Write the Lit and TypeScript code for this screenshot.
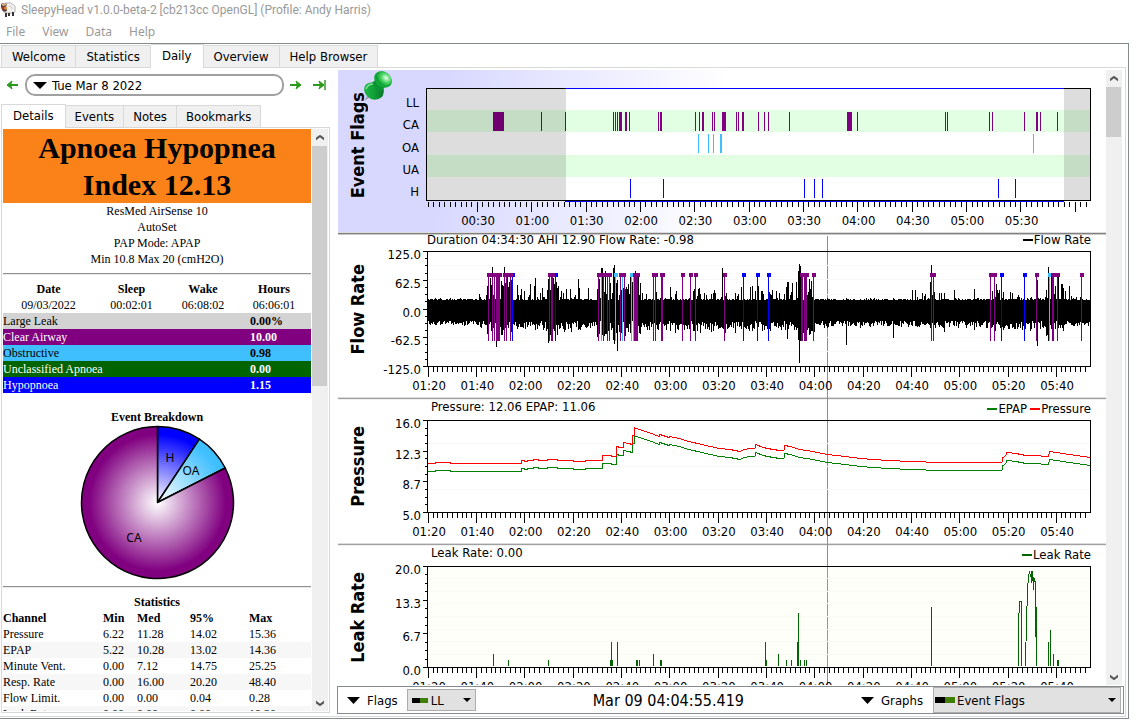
import { LitElement, html, svg, css } from "lit";
import { customElement, property } from "lit/decorators.js";

const PURPLE = "#800080";
const CYAN = "#40bfff";
const BLUE = "#0000ff";
const LEAK = "#006400";

type Bar = [x: number, width: number];

interface Channel {
  label: string;
  color: string;
  bars: Bar[];
}

const one = (...xs: number[]): Bar[] => xs.map((x) => [x, 1] as Bar);

const channels: Channel[] = [
  { label: "LL", color: "#808080", bars: [] },
  {
    label: "CA",
    color: PURPLE,
    bars: [
      [493, 11], [619, 3], [625, 2], [660, 2], [702, 2], [722, 4], [742, 2], [847, 5], [1036, 2],
      ...one(541, 565, 613, 615, 617, 629, 658, 695, 699, 712, 714, 736, 738, 758, 764, 768, 789, 857, 945, 947, 989, 992, 1024, 1040, 1057),
    ],
  },
  { label: "OA", color: CYAN, bars: [[720, 2], ...one(698, 708, 713, 1033)] },
  { label: "UA", color: "#006400", bars: [] },
  { label: "H", color: BLUE, bars: one(630, 663, 804, 814, 822, 998, 1015) },
];

const flowMarks: { color: string; heads: Bar[]; lines: Bar[] }[] = [
  {
    color: PURPLE,
    heads: [
      [487, 15], [503, 10], [548, 7], [597, 15], [619, 7], [633, 7], [652, 6], [660, 5], [681, 4], [689, 4], [694, 4], [723, 4],
      [800, 9], [812, 4], [930, 6], [989, 8], [1035, 4], [1051, 9], [1080, 4],
    ],
    lines: [
      [496, 4], [551, 2], [634, 4], [661, 2], [801, 2], [804, 3], [1052, 2],
      ...one(488, 492, 494, 504, 506, 510, 549, 598, 603, 607, 609, 620, 624, 653, 655, 682, 690, 695, 724, 813, 931, 933, 990, 994, 1036, 1057, 1081),
    ],
  },
  {
    color: BLUE,
    heads: [[513, 2], [555, 3], [742, 4], [756, 4], [767, 4], [1000, 4], [1023, 4]],
    lines: one(512, 555, 743, 757, 768, 1001, 1024),
  },
  {
    color: CYAN,
    heads: [[614, 4], [630, 3], [1048, 3]],
    lines: one(601, 615, 622, 631, 633, 1049),
  },
];

// Breathing envelope: from x, highest peak and lowest trough, share of tall breaths.
const envelope: [number, number, number, number][] = [
  [428, 298, 327, 0.3], [478, 292, 328, 0.5], [487, 272, 336, 0.9], [513, 284, 331, 0.5], [548, 274, 336, 0.9],
  [558, 284, 333, 0.35], [566, 288, 332, 0.3], [597, 270, 338, 0.9], [640, 286, 333, 0.3], [681, 286, 333, 0.4],
  [727, 286, 333, 0.4], [786, 278, 334, 0.7], [798, 266, 342, 1], [803, 276, 336, 0.8], [815, 298, 328, 0.3],
  [911, 292, 328, 0.3], [930, 275, 330, 0.9], [935, 292, 330, 0.3], [945, 298, 328, 0.3], [988, 282, 331, 0.7],
  [1000, 291, 332, 0.35], [1034, 288, 330, 0.5], [1046, 273, 336, 0.9], [1062, 284, 331, 0.5], [1070, 294, 328, 0.35],
  [1080, 284, 328, 0.6], [1084, 298, 327, 0.3],
];

const spikes: [number, number, number][] = [
  [492, 267, 330], [504, 267, 333], [496, 282, 347], [535, 278, 330], [548, 279, 343], [578, 279, 330], [601, 268, 335],
  [602, 268, 335], [613, 268, 340], [614, 265, 344], [617, 280, 351], [722, 268, 328], [799, 264, 363], [798, 271, 340],
  [800, 266, 341], [787, 282, 339], [846, 298, 345], [893, 298, 338], [912, 290, 325], [915, 290, 325], [931, 265, 332],
  [954, 290, 325], [974, 289, 330], [1037, 280, 346], [1048, 267, 341], [1049, 275, 340], [944, 293, 332], [640, 283, 334],
];

function flowPath(): string {
  let seed = 7919;
  const rnd = () => (seed = (seed * 16807) % 2147483647) / 2147483647;
  let d = "";
  for (let x = 428; x < 1090; x++) {
    const [, peak, trough, share] = [...envelope].reverse().find(([from]) => x >= from)!;
    const tall = rnd() < share;
    let top = 299 + Math.round(rnd()) - (tall ? Math.round(rnd() * (299 - peak)) : 0);
    let bottom = 321 + Math.round(rnd() * (trough - 321) * (tall ? 1 : 0.8));
    for (const [sx, t, b] of spikes) {
      if (sx === x) {
        top = Math.min(top, t);
        bottom = Math.max(bottom, b);
      }
    }
    d += `M${x} ${top}h1V${bottom}h-1z`;
  }
  return d;
}

const pressure: [number, number][] = [
  [428, 463], [435, 463], [435, 462], [450, 462], [450, 463], [521, 463], [521, 460], [524, 460], [524, 461], [527, 461],
  [527, 460], [533, 460], [533, 459], [538, 459], [538, 460], [547, 460], [547, 459], [557, 459], [557, 460], [573, 460],
  [573, 461], [585, 461], [585, 460], [602, 460], [602, 455], [611, 455], [611, 456], [616, 456], [616, 446], [618, 446],
  [618, 447], [623, 447], [623, 442], [629, 443], [632, 444], [632, 435], [634, 435], [634, 427], [639, 429], [649, 432],
  [659, 436], [660, 434], [669, 437], [670, 436], [679, 438], [689, 441], [702, 444], [719, 448], [730, 449], [740, 451],
  [744, 449], [750, 448], [755, 448], [756, 444], [763, 447], [773, 449], [780, 450], [784, 450], [785, 445], [790, 446],
  [800, 449], [813, 451], [827, 454], [845, 456], [861, 458], [873, 459], [888, 460], [911, 461], [941, 462], [1002, 462],
  [1003, 457], [1006, 455], [1007, 452], [1016, 453], [1026, 455], [1033, 455], [1048, 456], [1050, 451], [1063, 453],
  [1076, 455], [1090, 457],
];

const pressurePath = (shift: number) =>
  "M" + pressure.map(([x, y]) => `${x} ${y + shift + 0.5}`).join("L");

const leaks: [x: number, top: number, width: number][] = [
  [493, 654, 1], [508, 660, 1], [548, 660, 1], [610, 660, 3], [611, 642, 1], [617, 642, 1], [636, 660, 2], [639, 660, 1],
  [653, 654, 1], [660, 660, 2], [765, 642, 1], [766, 660, 1], [778, 654, 1], [786, 660, 1], [791, 660, 1], [797, 642, 1],
  [798, 613, 1], [800, 660, 1], [804, 660, 1], [806, 660, 1], [931, 607, 1], [1018, 613, 1], [1021, 601, 1],
  [1048, 642, 1], [1050, 630, 1], [1053, 654, 1], [1057, 660, 2],
];

const PLOT_X = 426;
const PLOT_W = 665;
const pct = (x: number) => `${((x - PLOT_X) / PLOT_W) * 100}%`;

const timeTicks = (y: number, start: number, step: number, per: number, phase: number) => {
  const out = [];
  for (let i = 0; start + i * step < 1089; i++) {
    const x = Math.floor(start + i * step);
    out.push(svg`<rect x=${x} y=${y} width="1" height=${(i - phase) % per === 0 ? 10 : 5}></rect>`);
  }
  return out;
};

const stdTicks = (y: number) => timeTicks(y, 428.3, 4.831, 10, 0);

const stdTimes = ["01:20", "01:40", "02:00", "02:20", "02:40", "03:00", "03:20", "03:40", "04:00", "04:20", "04:40", "05:00", "05:20", "05:40"]
  .map((text, i) => ({ text, x: 429 + i * 48.31 }));

const flagTimes = ["00:30", "01:00", "01:30", "02:00", "02:30", "03:00", "03:30", "04:00", "04:30", "05:00", "05:30"]
  .map((text, i) => ({ text, x: 478 + i * 54.36 }));

const frame = (top: number, bottom: number, left = 427) => svg`
  <path d="M${left} ${top}H1091V${bottom + 1}H${left}zM${left + 1} ${top + 1}V${bottom}H1090V${top + 1}z" fill-rule="evenodd"></path>`;

@customElement("graph-pane")
export class GraphPane extends LitElement {
  @property() name = "";
  @property() status = "";
  @property({ attribute: false }) legend: { text: string; color: string }[] = [];
  @property({ attribute: false }) yLabels: { text: string; y: number }[] = [];
  @property({ type: Boolean }) ticks = false;
  @property({ type: Number }) top = 0;
  @property({ type: Number }) plotHeight = 100;
  @property({ type: Number }) header = 20;
  @property({ attribute: false }) times: { text: string; x: number }[] = [];
  @property({ attribute: false }) plot: unknown = null;

  static styles = css`
    :host {
      display: block;
      position: relative;
      z-index: 1;
      flex: none;
      overflow: hidden;
    }
    .grid {
      display: grid;
      grid-template-columns: 40px 48px minmax(0, 1fr) 15px;
    }
    .name {
      grid-column: 1;
      grid-row: 2;
      min-height: 0;
      padding-bottom: 10px;
      display: flex;
      align-items: center;
      justify-content: center;
    }
    h2 {
      margin: 0;
      font-size: 18px;
      line-height: 24px;
      font-weight: bold;
      white-space: nowrap;
      writing-mode: vertical-rl;
      transform: rotate(180deg);
    }
    .head {
      grid-column: 3;
      grid-row: 1;
      display: flex;
      justify-content: space-between;
      align-items: flex-start;
      line-height: 14px;
      white-space: nowrap;
    }
    .tight {
      line-height: 10px;
    }
    .status {
      padding-left: 5px;
    }
    .tight .status {
      padding-left: 1px;
    }
    .legend {
      display: flex;
      gap: 3px;
      padding-top: 2px;
    }
    .tight .legend {
      padding-top: 0;
    }
    .legend span {
      display: flex;
      align-items: center;
      gap: 1px;
    }
    .legend svg {
      width: 10px;
      height: 2px;
    }
    .axis {
      grid-column: 2;
      grid-row: 2;
      width: 48px;
      overflow: visible;
    }
    .plot {
      grid-column: 3;
      grid-row: 2;
      width: 100%;
    }
    .times {
      grid-column: 3;
      grid-row: 3;
      width: 100%;
      height: 20px;
      overflow: visible;
    }
    svg {
      display: block;
    }
  `;

  private axisTicks() {
    if (!this.ticks) return null;
    const first = this.yLabels[0].y;
    const span = this.yLabels[this.yLabels.length - 1].y - first;
    const count = (this.yLabels.length - 1) * 4;
    return Array.from({ length: count + 1 }, (_, i) => {
      const major = i % 4 === 0;
      return svg`<rect x=${major ? 45 : 47} y=${Math.round(first + (span * i) / count)} width=${major ? 4 : 2} height="1"></rect>`;
    });
  }

  render() {
    return html`
      <section class="grid" style="grid-template-rows: ${this.header}px ${this.plotHeight}px 20px">
        <div class="name"><h2>${this.name}</h2></div>
        <div class="head ${this.header < 18 ? "tight" : ""}">
          <span class="status">${this.status}</span>
          <div class="legend">
            ${this.legend.map(
              (l) => html`<span><svg viewBox="0 0 10 2"><rect width="10" height="2" fill=${l.color}></rect></svg>${l.text}</span>`
            )}
          </div>
        </div>
        <svg class="axis" viewBox="0 ${this.top} 48 ${this.plotHeight}" height=${this.plotHeight} shape-rendering="crispEdges">
          ${this.axisTicks()}
          ${this.yLabels.map((l) => svg`<text x=${this.ticks ? 43 : 41} y=${Math.round(l.y + 8)} text-anchor="end">${l.text}</text>`)}
        </svg>
        <svg class="plot" viewBox="426 ${this.top} 665 ${this.plotHeight}" height=${this.plotHeight} preserveAspectRatio="none" shape-rendering="crispEdges">
          ${this.plot}
        </svg>
        <svg class="times">
          ${this.times.map((t) => svg`<text x=${pct(t.x)} y="13" text-anchor="middle">${t.text}</text>`)}
        </svg>
      </section>
    `;
  }
}

@customElement("scroll-bar")
export class ScrollBar extends LitElement {
  @property({ type: Number }) size = 100;

  static styles = css`
    :host {
      display: flex;
      flex-direction: column;
      width: 16px;
      flex: none;
      background: #f0f0f0;
    }
    button {
      display: flex;
      align-items: center;
      justify-content: center;
      height: 17px;
      width: 15px;
      padding: 0;
      border: 0;
      background: none;
    }
    .track {
      flex: 1;
      min-height: 0;
    }
    .thumb {
      width: 15px;
      background: #cdcdcd;
    }
  `;

  render() {
    return html`
      <button aria-label="Scroll up"><svg width="8" height="6"><path d="M0 5V3L4 0L8 3V5L4 2z" fill="#505050" stroke="#505050" stroke-width="0.5"></path></svg></button>
      <div class="track"><div class="thumb" style="height: ${this.size}px"></div></div>
      <button aria-label="Scroll down"><svg width="8" height="6"><path d="M0 1V3L4 6L8 3V1L4 4z" fill="#505050" stroke="#505050" stroke-width="0.5"></path></svg></button>
    `;
  }
}

const arrow = (bar: boolean) => svg`
  <path d="M1 6H9" stroke="#2a9a1c" stroke-width="2"></path>
  <path d="M7 2L12 6L7 10L8.500 6z" fill="#2a9a1c" stroke="#2a9a1c"></path>
  ${bar ? svg`<path d="M13 1V11" stroke="#3a9a30" stroke-width="1.500"></path>` : null}`;

const stats = [
  ["Pressure", "6.22", "11.28", "14.02", "15.36"],
  ["EPAP", "5.22", "10.28", "13.02", "14.36"],
  ["Minute Vent.", "0.00", "7.12", "14.75", "25.25"],
  ["Resp. Rate", "0.00", "16.00", "20.20", "48.40"],
  ["Flow Limit.", "0.00", "0.00", "0.04", "0.28"],
  ["Leak Rate", "0.00", "0.00", "0.00", "19.20"],
];

const indices = [
  { name: "Large Leak", value: "0.00%", cls: "ll" },
  { name: "Clear Airway", value: "10.00", cls: "ca" },
  { name: "Obstructive", value: "0.98", cls: "oa" },
  { name: "Unclassified Apnoea", value: "0.00", cls: "ua" },
  { name: "Hypopnoea", value: "1.15", cls: "hy" },
];

@customElement("app-root")
export class AppRoot extends LitElement {
  static styles = css`
    :host {
      display: flex;
      flex-direction: column;
      height: 100vh;
      background: #fff;
      color: #000;
      font-family: "DejaVu Sans Condensed", "Noto Sans", sans-serif;
      font-size: 13px;
    }
    button,
    select {
      font: inherit;
      color: inherit;
      margin: 0;
    }
    .title {
      display: flex;
      align-items: center;
      gap: 5px;
      height: 20px;
      color: #999;
      font-family: Roboto, "Noto Sans", sans-serif;
      font-size: 12px;
      white-space: nowrap;
    }
    .menu {
      display: flex;
      gap: 17px;
      height: 23px;
      padding-left: 6px;
      color: #999;
      font-family: "Noto Sans", sans-serif;
      font-size: 12px;
    }
    .menu button {
      border: 0;
      padding: 0;
      background: none;
    }
    .frame {
      flex: 1;
      min-height: 0;
      display: flex;
      flex-direction: column;
      margin: 0 4px 3px 0;
      padding: 0 2px 1px 0;
      border: solid #848a90;
      border-width: 1px 1px 1px 0;
    }
    .tabs {
      display: flex;
      align-items: flex-end;
      padding-left: 1px;
      height: 23px;
      flex: none;
    }
    .tabs button {
      height: 22px;
      padding: 0 10px;
      border: 1px solid #d9d9d9;
      border-left-width: 0;
      border-bottom: 0;
      background: #f0f0f0;
      white-space: nowrap;
    }
    .tabs button:first-child {
      border-left-width: 1px;
    }
    .side .tabs button {
      padding: 0 9px;
    }
    .tabs .on,
    .side .tabs .on {
      position: relative;
      height: 24px;
      margin-bottom: -1px;
      padding: 0 11px 2px;
      background: #fff;
    }
    .pane {
      flex: 1;
      min-height: 0;
      display: flex;
      gap: 7px;
      border: solid #d9d9d9;
      border-width: 1px 1px 1px 0;
    }
    .side {
      flex: none;
      width: 330px;
      display: flex;
      flex-direction: column;
      padding-bottom: 3px;
    }
    .nav {
      display: flex;
      align-items: center;
      height: 36px;
      padding-left: 5px;
      box-sizing: border-box;
      padding-bottom: 2px;
    }
    .icon {
      display: flex;
      border: 0;
      padding: 0;
      background: none;
    }
    .date {
      display: flex;
      align-items: center;
      gap: 5px;
      flex: 1;
      height: 22px;
      margin: 0 5px 0 5px;
      padding: 0 6px;
      border: 2px solid #a0a0a0;
      border-radius: 10px;
      background: #fff;
    }
    .next {
      margin-right: 8px;
    }
    .last {
      margin-right: 3px;
    }
    .box {
      flex: 1;
      min-height: 0;
      display: flex;
      margin-left: 1px;
      padding: 1px;
      border: 1px solid #d9d9d9;
    }
    .details {
      flex: 1;
      min-width: 0;
      overflow: hidden;
      margin-right: 1px;
      font-family: "Liberation Serif", serif;
      font-size: 12px;
      line-height: 16px;
      text-align: center;
    }
    h1 {
      margin: 0;
      background: #fa8219;
      font-size: 30px;
      line-height: 37px;
    }
    p {
      margin: 0;
    }
    hr {
      height: 1px;
      margin: 6px 0;
      border: 0;
      border-top: 1px solid #909090;
      background: #e8e8e8;
    }
    table {
      width: 100%;
      border-collapse: collapse;
      table-layout: fixed;
    }
    th,
    td {
      padding: 0;
      white-space: nowrap;
    }
    .index td,
    .stats td,
    .stats th {
      text-align: left;
    }
    .index td:last-child {
      width: 61px;
      font-weight: bold;
    }
    .ll { background: #d3d3d3; }
    .ca { background: #800080; color: #fff; }
    .oa { background: #40bfff; }
    .ua { background: #006400; color: #fff; }
    .hy { background: #00f; color: #fff; }
    h3 {
      margin: 0;
      font-size: 12px;
      line-height: 16px;
    }
    .breakdown {
      padding-top: 16px;
    }
    .breakdown svg {
      display: block;
      margin: 0 auto;
      font-family: "Noto Sans", sans-serif;
      font-size: 12px;
    }
    .stats tbody tr:nth-child(even) {
      background: #f7f7f7;
    }
    .main {
      flex: 1;
      min-width: 0;
      display: flex;
      flex-direction: column;
      padding: 2px 1px 2px 0;
    }
    .scroll {
      flex: 1;
      min-height: 0;
      display: flex;
      padding: 0 2px 1px 1px;
    }
    .graphs {
      flex: 1;
      min-width: 0;
      display: flex;
      flex-direction: column;
      overflow: hidden;
      position: relative;
    }
    .flags {
      background: linear-gradient(95deg, #d8d8ff 14%, #fff 50%);
    }
    .sep {
      flex: none;
      height: 1px;
      background: #a0a0a0;
      border: solid #dcdcdc;
      border-bottom-color: #f0f0f0;
      border-width: 1px 0;
    }
    .active {
      background: #808080;
      border-bottom-color: #c8c8c8;
    }
    .cursor-track {
      position: absolute;
      inset: 166px 15px 0 88px;
    }
    .cursor {
      position: absolute;
      top: 0;
      bottom: 0;
      width: 1px;
      background: #0e0;
    }
    .pin {
      position: absolute;
      z-index: 2;
      left: 25px;
      top: 0;
    }
    .bar {
      flex: none;
      display: flex;
      align-items: center;
      height: 26px;
      border: 1px solid #848a90;
    }
    .toggle {
      display: flex;
      align-items: center;
      gap: 7px;
      padding: 0;
      border: 0;
      background: none;
    }
    .flag-toggle {
      margin: 0 9px 0 9px;
    }
    .stamp {
      flex: 1;
      text-align: center;
      font-size: 16px;
      white-space: nowrap;
    }
    .pick {
      position: relative;
      display: flex;
      align-items: center;
    }
    .pick select {
      appearance: none;
      box-sizing: border-box;
      width: 100%;
      height: 100%;
      padding: 0 0 0 23px;
      border: 1px solid #adadad;
      border-radius: 0;
      background: #e1e1e1;
    }
    .pick svg {
      position: absolute;
      pointer-events: none;
    }
    .swatch {
      left: 5px;
    }
    .drop {
      right: 5px;
    }
    .small {
      width: 69px;
      height: 22px;
    }
    .large {
      width: 188px;
      height: 26px;
      margin-left: 10px;
      margin-right: 2px;
    }
    .large .swatch {
      left: 2px;
    }
  `;

  private pie() {
    const c = 77.5;
    const r = 76;
    const at = (deg: number) => {
      const a = (deg * Math.PI) / 180;
      return `${(c + r * Math.sin(a)).toFixed(2)} ${(c - r * Math.cos(a)).toFixed(2)}`;
    };
    const stops = (id: string, color: string) => svg`
      <radialGradient id=${id} gradientUnits="userSpaceOnUse" cx=${c} cy=${c} r=${r}>
        <stop offset="0" stop-color="#fff"></stop><stop offset="0.9" stop-color=${color}></stop>
      </radialGradient>`;
    return html`
      <svg width="155" height="155" viewBox="0 0 155 155" role="img" aria-label="Event Breakdown">
        <defs>${stops("gh", "#0000ff")}${stops("go", "#40bfff")}${stops("gc", "#800080")}</defs>
        <g stroke="#000" stroke-width="1.5" stroke-linejoin="round">
          <path fill="url(#gh)" d="M${c} ${c}L${at(0)}A${r} ${r} 0 0 1 ${at(33.5)}z"></path>
          <path fill="url(#go)" d="M${c} ${c}L${at(33.5)}A${r} ${r} 0 0 1 ${at(63)}z"></path>
          <path fill="url(#gc)" d="M${c} ${c}L${at(63)}A${r} ${r} 0 1 1 ${at(0)}z"></path>
        </g>
        <g text-anchor="middle">
          <text x="90" y="37">H</text><text x="111" y="50">OA</text><text x="54" y="117">CA</text>
        </g>
      </svg>`;
  }

  private flagsPlot() {
    const bands = [88, 110, 132, 155, 177, 200];
    return svg`
      <rect x="427" y="89" width="663" height="111" fill="#fff"></rect>
      <rect x="427" y="110" width="663" height="22" fill="#e3ffe3"></rect>
      <rect x="427" y="155" width="663" height="22" fill="#e3ffe3"></rect>
      ${channels.map((c, i) => c.bars.map(([x, w]) => svg`<rect x=${x} y=${bands[i] + 2} width=${w} height="19" fill=${c.color}></rect>`))}
      <rect x="427" y="89" width="139" height="111" fill="#000" fill-opacity="0.133"></rect>
      <rect x="1064" y="89" width="26" height="111" fill="#000" fill-opacity="0.133"></rect>
      ${frame(88, 200, 426)}
      <rect x="565" y="88" width="499" height="1" fill="#00f"></rect>
      <rect x="565" y="201" width="499" height="1" fill="#00f"></rect>
      ${timeTicks(202, 428.4, 5.436, 10, 9)}`;
  }

  private flowPlot() {
    return svg`
      ${[265, 279, 294, 323, 337, 351].map((y) => svg`<rect x="428" y=${y} width="662" height="1" fill="#f8f8f8"></rect>`)}
      <path d=${flowPath()}></path>
      ${flowMarks.map((m) => svg`<g fill=${m.color}>
        ${m.lines.map(([x, w]) => svg`<rect x=${x} y="277" width=${w} height="64"></rect>`)}
        ${m.heads.map(([x, w]) => svg`<rect x=${x} y="273" width=${w} height="4"></rect>`)}
      </g>`)}
      ${frame(251, 366)}${stdTicks(367)}`;
  }

  private pressurePlot() {
    return svg`
      ${[443, 466, 489].map((y) => svg`<rect x="428" y=${y} width="662" height="1" fill="#f8f8f8"></rect>`)}
      <path d=${pressurePath(8)} fill="none" stroke="#008000"></path>
      <path d=${pressurePath(0)} fill="none" stroke="#f00"></path>
      ${frame(420, 512)}${stdTicks(513)}`;
  }

  private leakPlot() {
    return svg`
      <rect x="428" y="567" width="662" height="100" fill="#ffffc0" fill-opacity="0.1"></rect>
      ${[578, 591, 603, 616, 629, 641, 654].map((y) => svg`<rect x="428" y=${y} width="662" height="1" fill="#fafaf4"></rect>`)}
      <g fill=${LEAK}>
        ${leaks.map(([x, y, w]) => svg`<rect x=${x} y=${y} width=${w} height=${666 - y}></rect>`)}
        <path d="M1019 613V601H1021V602H1020V613z"></path>
      </g>
      <path d="M1025.500 666V660L1026.500 624L1027.500 589L1028.500 577L1029.500 571.500L1030.500 577L1031.500 571.500V583L1032.500 571.500L1033.500 590V577L1035.500 583V637L1036.500 607V666"
        fill="none" stroke=${LEAK}></path>
      ${frame(566, 667)}${stdTicks(668)}`;
  }

  render() {
    return html`
      <header class="title">
        <svg width="16" height="18" viewBox="0 0 16 18" aria-hidden="true">
          <path d="M4 4q1-3 4-2q3-1 4 1q4 1 3 5q1 4-3 4H6q-3 0-3-3z" fill="#f2f0ee" stroke="#999" stroke-width="0.7"></path>
          <path d="M1 3Q4 1 7 3L6 6L7 10Q4 12 2 9L1 6z" fill="#5a403c"></path>
          <path d="M1 3L5 2L7 4L3 5z" fill="#d8b890"></path>
          <circle cx="5.500" cy="7" r="1.500" fill="#e88a20"></circle><circle cx="3" cy="7" r="1" fill="#d03020"></circle>
          <path d="M5 12h2v4H5zM8 12h2v3H8zM12 11h2v4h-2z" fill="#333"></path>
          <path d="M9 5q3 0 3 3" fill="none" stroke="#ccc"></path>
        </svg>
        <span>SleepyHead v1.0.0-beta-2 [cb213cc OpenGL] (Profile: Andy Harris)</span>
      </header>
      <nav class="menu">
        <button>File</button><button>View</button><button>Data</button><button>Help</button>
      </nav>
      <div class="frame">
        <div class="tabs" role="tablist">
          <button role="tab">Welcome</button><button role="tab">Statistics</button><button role="tab" class="on" aria-selected="true">Daily</button><button role="tab">Overview</button><button role="tab">Help Browser</button>
        </div>
        <div class="pane">
          <aside class="side">
            <div class="nav">
              <button class="icon" aria-label="Previous day"><svg width="15" height="12"><g transform="rotate(180 7 6)">${arrow(false)}</g></svg></button>
              <button class="date"><svg width="14" height="7"><path d="M0 0H14L7 7z"></path></svg>Tue Mar 8 2022</button>
              <button class="icon next" aria-label="Next day"><svg width="15" height="12">${arrow(false)}</svg></button>
              <button class="icon last" aria-label="Latest day"><svg width="15" height="12">${arrow(true)}</svg></button>
            </div>
            <div class="tabs" role="tablist">
              <button role="tab" class="on" aria-selected="true">Details</button><button role="tab">Events</button><button role="tab">Notes</button><button role="tab">Bookmarks</button>
            </div>
            <div class="box">
              <div class="details">
                <h1>Apnoea Hypopnea<br />Index 12.13</h1>
                <p>ResMed AirSense 10</p>
                <p>AutoSet</p>
                <p>PAP Mode: APAP</p>
                <p>Min 10.8 Max 20 (cmH2O)</p>
                <hr />
                <table>
                  <colgroup><col style="width: 91px" /><col style="width: 75px" /><col style="width: 68px" /><col /></colgroup>
                  <tr><th>Date</th><th>Sleep</th><th>Wake</th><th>Hours</th></tr>
                  <tr><td>09/03/2022</td><td>00:02:01</td><td>06:08:02</td><td>06:06:01</td></tr>
                </table>
                <table class="index">
                  ${indices.map((i) => html`<tr class=${i.cls}><td>${i.name}</td><td>${i.value}</td></tr>`)}
                </table>
                <div class="breakdown">
                  <h3>Event Breakdown</h3>
                  ${this.pie()}
                </div>
                <hr />
                <h3>Statistics</h3>
                <table class="stats">
                  <colgroup><col style="width: 100px" /><col style="width: 34px" /><col style="width: 53px" /><col style="width: 59px" /><col /></colgroup>
                  <thead><tr><th>Channel</th><th>Min</th><th>Med</th><th>95%</th><th>Max</th></tr></thead>
                  <tbody>${stats.map((r) => html`<tr>${r.map((v) => html`<td>${v}</td>`)}</tr>`)}</tbody>
                </table>
              </div>
              <scroll-bar size="240"></scroll-bar>
            </div>
          </aside>
          <main class="main">
            <div class="scroll">
              <div class="graphs">
                <svg class="pin" width="30" height="32" viewBox="0 0 30 32" aria-hidden="true">
                  <defs>
                    <radialGradient id="cap" cx="0.6" cy="0.35" r="0.6"><stop offset="0" stop-color="#f0fff0"></stop><stop offset="0.5" stop-color="#50d868"></stop><stop offset="1" stop-color="#08a030"></stop></radialGradient>
                    <linearGradient id="body"><stop offset="0" stop-color="#20b848"></stop><stop offset="0.5" stop-color="#10a038"></stop><stop offset="1" stop-color="#087828"></stop></linearGradient>
                  </defs>
                  <path d="M6 23L1 31L9 26z" fill="#a898b8"></path>
                  <path d="M1 20Q1 14 6 13Q11 11 14 14L20 17Q22 22 19 27Q14 31 8 29Q2 26 1 20z" fill="url(#body)"></path>
                  <path d="M9 13L14 8L23 15L19 21Q14 22 9 13z" fill="#0a9434"></path>
                  <path d="M3 19Q5 14 10 14" fill="none" stroke="#80e090" stroke-width="1.500"></path>
                  <ellipse cx="20" cy="9.500" rx="9.500" ry="7.500" transform="rotate(38 20 9.500)" fill="#12a83a"></ellipse>
                  <ellipse cx="20.500" cy="8.500" rx="8.500" ry="6.500" transform="rotate(38 20.500 8.500)" fill="url(#cap)"></ellipse>
                </svg>
                <div class="cursor-track"><div class="cursor" style="left: ${pct(827)}"></div></div>
                <graph-pane class="flags" name="Event Flags" .top=${88} .header=${18} .plotHeight=${124} .times=${flagTimes}
                  .yLabels=${channels.map((c, i) => ({ text: c.label, y: 99 + i * 22.25 }))}
                  .plot=${this.flagsPlot()}></graph-pane>
                <div class="sep active"></div>
                <graph-pane name="Flow Rate" status="Duration 04:34:30 AHI 12.90 Flow Rate: -0.98" .top=${251} .header=${16} .plotHeight=${126} ticks
                  .times=${stdTimes} .legend=${[{ text: "Flow Rate", color: "#000" }]}
                  .yLabels=${["125.0", "62.5", "0.0", "-62.5", "-125.0"].map((text, i) => ({ text, y: 251 + i * 28.75 }))}
                  .plot=${this.flowPlot()}></graph-pane>
                <div class="sep"></div>
                <graph-pane name="Pressure" status="Pressure: 12.06 EPAP: 11.06" .top=${420} .header=${20} .plotHeight=${103} ticks
                  .times=${stdTimes} .legend=${[{ text: "EPAP", color: "#008000" }, { text: "Pressure", color: "#f00" }]}
                  .yLabels=${["16.0", "12.3", "8.7", "5.0"].map((text, i) => ({ text, y: 420 + (i * 92) / 3 }))}
                  .plot=${this.pressurePlot()}></graph-pane>
                <div class="sep"></div>
                <graph-pane name="Leak Rate" status="Leak Rate: 0.00" .top=${566} .header=${20} .plotHeight=${112} ticks
                  .times=${stdTimes} .legend=${[{ text: "Leak Rate", color: LEAK }]}
                  .yLabels=${["20.0", "13.3", "6.7", "0.0"].map((text, i) => ({ text, y: 566 + (i * 101) / 3 }))}
                  .plot=${this.leakPlot()}></graph-pane>
              </div>
              <scroll-bar size="50"></scroll-bar>
            </div>
            <footer class="bar">
              <button class="toggle flag-toggle"><svg width="13" height="7"><path d="M0 0H13L6.500 7z"></path></svg>Flags</button>
              <label class="pick small">
                <select aria-label="Flags"><option>LL</option></select>
                <svg class="swatch" width="16" height="5"><path d="M0 0h8v5H0z"></path><path d="M8 0h8v5H8z" fill="#3f8000"></path></svg>
                <svg class="drop" width="8" height="4"><path d="M0 0H8L4 4z"></path></svg>
              </label>
              <output class="stamp">Mar 09 04:04:55.419</output>
              <button class="toggle"><svg width="13" height="7"><path d="M0 0H13L6.500 7z"></path></svg>Graphs</button>
              <label class="pick large">
                <select aria-label="Graphs"><option>Event Flags</option></select>
                <svg class="swatch" width="20" height="6"><path d="M0 0h10v6H0z"></path><path d="M10 0h10v6H10z" fill="#3f8000"></path></svg>
                <svg class="drop" width="8" height="4"><path d="M0 0H8L4 4z"></path></svg>
              </label>
            </footer>
          </main>
        </div>
      </div>
    `;
  }
}
